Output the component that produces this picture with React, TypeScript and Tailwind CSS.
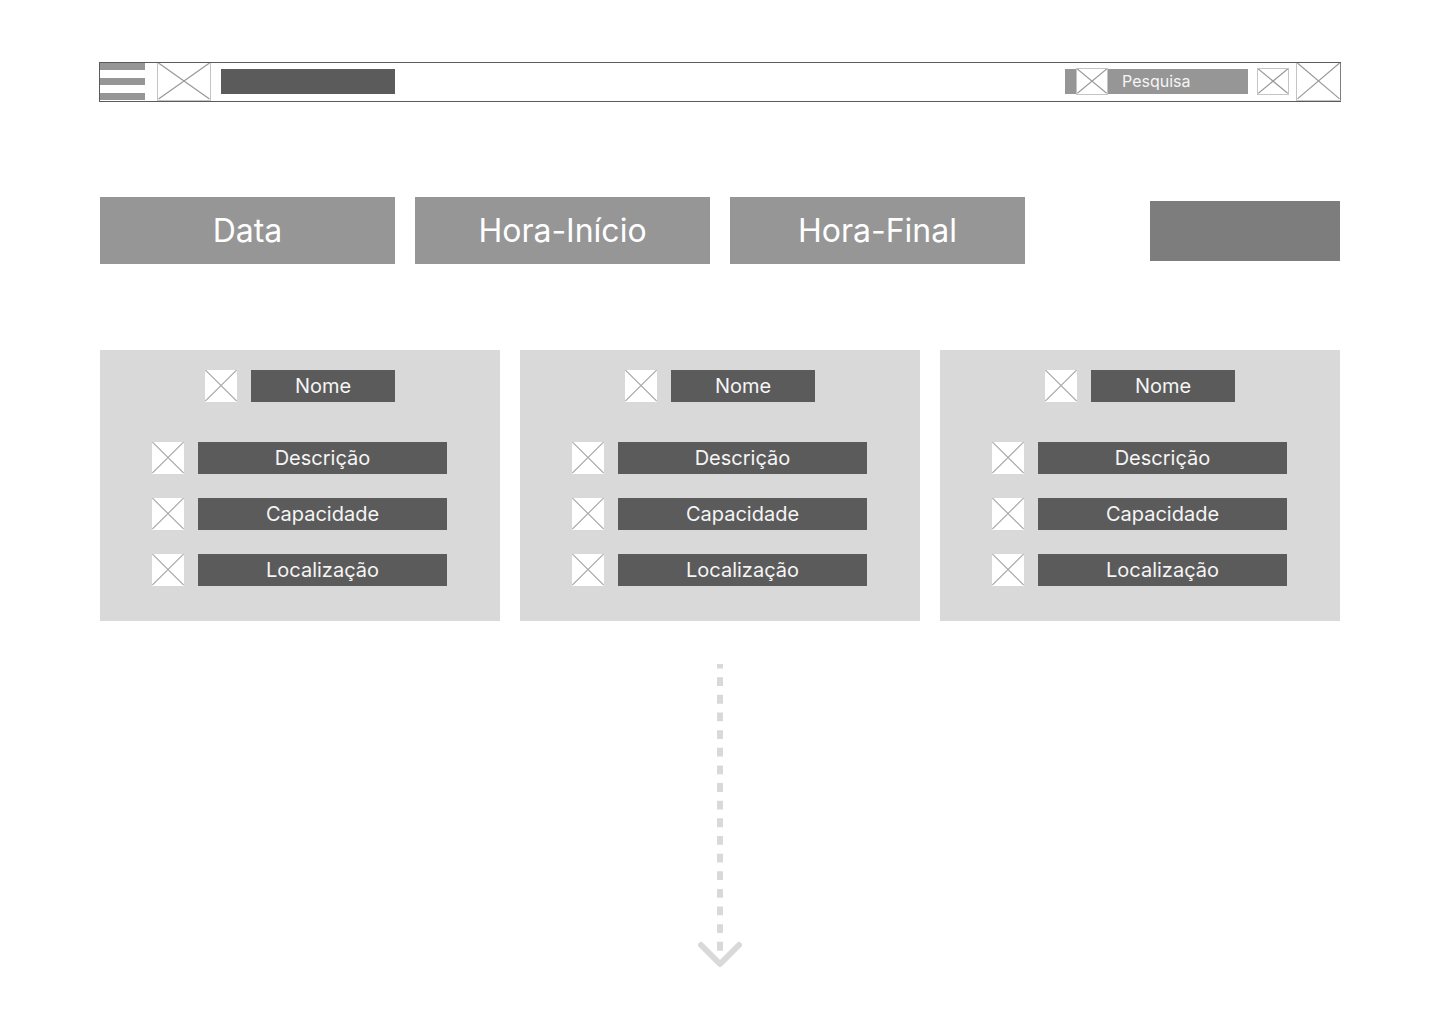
import React from "react";

function CrossBox({ className, stroke = "#999999" }: { className: string; stroke?: string }) {
  return (
    <span className={`block shrink-0 ${className}`}>
      <svg className="block h-full w-full" viewBox="0 0 100 100" preserveAspectRatio="none" aria-hidden="true">
        <path
          d="M1 0 L99 97 M99 0 L1 97"
          fill="none"
          stroke={stroke}
          strokeWidth="1.2"
          vectorEffect="non-scaling-stroke"
        />
      </svg>
    </span>
  );
}

function Header() {
  return (
    <header className="-mx-px flex h-10 items-center border border-[#5b5b5b]">
      <button type="button" aria-label="Menu" className="flex w-[45px] shrink-0 flex-col gap-2 self-start">
        <span className="h-[7px] bg-[#969696]" />
        <span className="h-[7px] bg-[#969696]" />
        <span className="h-[7px] bg-[#969696]" />
      </button>
      <CrossBox className="ml-3 h-full w-[54px] border border-t-0 border-[#c4c4c4]" />
      <div className="mb-px ml-2.5 h-[25px] w-[174px] bg-[#5b5b5b]" />
      <label className="mb-px ml-auto flex h-[25px] w-[183px] items-center bg-[#969696] pl-[11px]">
        <CrossBox className="h-[27px] w-8 border border-[#c4c4c4] bg-white" />
        <input
          type="search"
          aria-label="Pesquisa"
          placeholder="Pesquisa"
          className="mb-0.5 ml-3.5 h-6 min-w-0 flex-1 bg-transparent text-base text-[#f5f5f5] outline-none placeholder:text-[#f5f5f5]"
        />
      </label>
      <button type="button" aria-label="Notificações" className="mb-px ml-[9px]">
        <CrossBox className="h-[27px] w-8 border border-[#c4c4c4]" />
      </button>
      <button type="button" aria-label="Perfil" className="-mr-px ml-[7px] h-full">
        <CrossBox className="h-full w-[45px] border border-t-0 border-[#c4c4c4] border-r-[#7d7d7d]" />
      </button>
    </header>
  );
}

const filters = ["Data", "Hora-Início", "Hora-Final"];
const details = ["Descrição", "Capacidade", "Localização"];

function RoomCard() {
  return (
    <article className="bg-[#d9d9d9] pt-5 pr-[53px] pb-[35px] pl-[52px]">
      <div className="flex justify-center gap-3.5 pl-px">
        <CrossBox className="h-8 w-8 bg-white" stroke="#ababab" />
        <h2 className="flex h-8 w-36 items-center justify-center bg-[#5b5b5b] text-xl text-[#f5f5f5]">Nome</h2>
      </div>
      <ul className="mt-10 flex flex-col gap-6">
        {details.map((detail) => (
          <li key={detail} className="flex gap-3.5">
            <CrossBox className="h-8 w-8 bg-white" stroke="#ababab" />
            <span className="flex h-8 flex-1 items-center justify-center bg-[#5b5b5b] text-xl text-[#f5f5f5]">
              {detail}
            </span>
          </li>
        ))}
      </ul>
    </article>
  );
}

export default function App() {
  return (
    <div className="min-h-screen bg-white px-[100px] pt-[62px] font-['Inter',sans-serif]">
      <Header />
      <main>
        <form className="mt-[95px] flex items-center" onSubmit={(e) => e.preventDefault()}>
          <div className="grid flex-1 grid-cols-3 gap-5">
            {filters.map((filter) => (
              <button key={filter} type="button" className="h-[67px] bg-[#969696] text-[32px] text-white">
                {filter}
              </button>
            ))}
          </div>
          <button type="submit" aria-label="Filtrar" className="ml-[125px] h-[60px] w-[190px] shrink-0 bg-[#7d7d7d]" />
        </form>
        <section className="mt-[86px] grid grid-cols-3 gap-5">
          <RoomCard />
          <RoomCard />
          <RoomCard />
        </section>
        <svg
          className="mx-auto mt-[43px] block"
          width="46"
          height="304"
          viewBox="0 0 46 304"
          fill="none"
          stroke="#d9d9d9"
          strokeWidth="6"
          aria-hidden="true"
        >
          <path d="M23 0 V287" strokeDasharray="8.82 8.82" strokeDashoffset="4.41" />
          <path d="M4 281 L23 300 L42 281" strokeLinecap="round" strokeLinejoin="round" />
        </svg>
      </main>
    </div>
  );
}
